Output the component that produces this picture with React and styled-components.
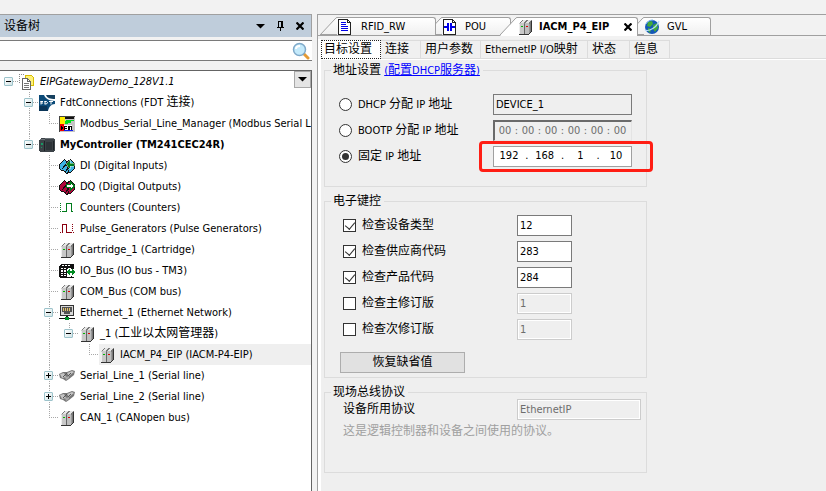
import { useState } from "react";
import styled, { createGlobalStyle, css } from "styled-components";

const GlobalStyle = createGlobalStyle`
  * {
    box-sizing: border-box;
  }
  body {
    margin: 0;
    background: #f0f0f0;
    color: #000;
    font: 11px/14px "DejaVu Sans Condensed", "Noto Sans CJK SC", sans-serif;
  }
  button, input {
    font: inherit;
    color: inherit;
    margin: 0;
    padding: 0;
  }
`;

const Page = styled.div`
  display: flex;
  gap: 5px;
  min-height: 100vh;
  padding-top: 14px;
  background: #f2f2f2;
`;

/* ---------- device tree ---------- */

const Sidebar = styled.aside`
  display: flex;
  flex-direction: column;
  flex: 0 0 312px;
  min-width: 0;
`;

const PanelHeader = styled.header`
  display: flex;
  align-items: center;
  height: 23px;
  padding: 0 1px 0 4px;
  background: #bfcddb;
  border-top: 1px solid #a0a0a0;
  border-right: 1px solid #a0a0a0;
`;

const PanelTitle = styled.h1`
  flex: 1;
  margin: 0;
  font-size: 12px;
  font-weight: normal;
`;

const IconButton = styled.button`
  display: grid;
  place-items: center;
  width: ${(props) => props.$width || 20}px;
  height: 16px;
  border: 0;
  background: none;
`;

const SearchBar = styled.label`
  display: flex;
  align-items: center;
  height: 21px;
  margin: 3px 0 9px;
  padding-right: 2px;
  background: #fff;
  border: solid #7a7a7a;
  border-width: 1px 0;
`;

const SearchInput = styled.input`
  flex: 1;
  min-width: 0;
  border: 0;
  outline: 0;
  background: none;
`;

const Tree = styled.ul`
  flex: 1;
  margin: 0;
  padding: 0;
  list-style: none;
  background: #fff;
  border-top: 1px solid #646464;
  border-right: 1px solid #646464;
  overflow: hidden;
`;

const TreeRow = styled.li`
  display: flex;
  align-items: center;
  height: 21px;
`;

const dotsDown =
  "repeating-linear-gradient(to bottom, #a8a8a8 0 1px, transparent 1px 2px)";
const dotsAcross =
  "repeating-linear-gradient(to right, #a8a8a8 0 1px, transparent 1px 2px)";

const guides = {
  none: css``,
  root: css`
    background: ${dotsAcross} right 10px / 8px 1px no-repeat;
  `,
  line: css`
    background: ${dotsDown} 10px 0 / 1px 100% no-repeat;
  `,
  tee: css`
    background: ${dotsDown} 10px 0 / 1px 100% no-repeat,
      ${dotsAcross} right 10px / 10px 1px no-repeat;
  `,
  end: css`
    background: ${dotsDown} 10px 0 / 1px 10px no-repeat,
      ${dotsAcross} right 10px / 10px 1px no-repeat;
  `,
};

const Guide = styled.span`
  display: flex;
  align-items: center;
  flex: 0 0 20px;
  height: 21px;
  padding-left: 5px;
  ${(props) => guides[props.$kind]}

  &:first-child {
    flex-basis: 19px;
    padding-left: 4px;
  }
`;

const Expander = styled.button`
  display: grid;
  place-items: center;
  width: 9px;
  height: 9px;
  border: 1px solid #9cc3cb;
  border-radius: 1px;
  background: linear-gradient(135deg, #fff, #d3e4e6);
`;

const NodeLabel = styled.span`
  display: flex;
  align-items: center;
  gap: 5px;
  flex: 1;
  min-width: 0;
  height: 21px;
  white-space: nowrap;
  overflow: hidden;
  font-weight: ${(props) => (props.$bold ? "bold" : "normal")};
  font-style: ${(props) => (props.$italic ? "italic" : "normal")};
  background: ${(props) => (props.$selected ? "#efefef" : "none")};

  svg {
    flex: none;
  }
`;

const TreeMenuButton = styled.button`
  display: grid;
  place-items: center;
  align-self: flex-start;
  width: 17px;
  height: 17px;
  background: #e4e4e4;
  border: 1px solid #a8a8a8;
`;

/* ---------- editor ---------- */

const Editor = styled.main`
  display: flex;
  flex-direction: column;
  flex: 1;
  min-width: 0;
  border-top: 1px solid #a0a0a0;
  border-left: 1px solid #a0a0a0;
`;

const FileTabs = styled.nav`
  display: flex;
  height: 21px;
  padding: 2px 2px 0;
  box-shadow: inset 0 -1px #a0a0a0;
`;

const FileTab = styled.div`
  display: flex;
  position: relative;
  z-index: ${(props) => (props.$active ? 5 : 4 - props.$order)};
  width: ${(props) => props.$width}px;
  height: ${(props) => (props.$active ? 19 : 18)}px;
  margin-left: ${(props) => (props.$order ? -11 : 0)}px;
`;

const FileTabBody = styled.div`
  display: flex;
  align-items: center;
  flex: 1;
  padding-right: 3px;
  background: linear-gradient(#fff, ${(props) => (props.$active ? "#fff" : "#f0f0f0")});
  border-top: 1px solid #a0a0a0;
  border-right: 1px solid #a0a0a0;
  border-top-right-radius: 3px;
`;

const FileTabButton = styled.button`
  display: flex;
  align-items: center;
  gap: ${(props) => props.$gap}px;
  flex: 1;
  border: 0;
  background: none;
  white-space: nowrap;
  font-weight: ${(props) => (props.$active ? "bold" : "normal")};
`;

const EditorPage = styled.div`
  flex: 1;
  margin-top: 3px;
  background: #efefef;
  border-left: 3px solid #fff;
`;

const SubTabs = styled.div`
  display: flex;
  height: 21px;
  padding-top: 1px;
  border-bottom: 1px solid #fff;
  box-shadow: inset 0 -1px #dcdcdc;
`;

const SubTab = styled.button`
  width: ${(props) => props.$width}px;
  height: 19px;
  padding-left: ${(props) => (props.$active ? 2 : 4)}px;
  border: solid #dcdcdc;
  border-width: 1px 1px 1px 0;
  background: #f0f0f0;
  text-align: left;
  white-space: nowrap;
  ${(props) =>
    props.$active &&
    css`
      background: #fff;
      border: 1px dotted #222;
    `}
`;

const Form = styled.form`
  display: flex;
  flex-direction: column;
  gap: 7px;
  max-width: 326px;
  padding: 3px 0 0 3px;
`;

const Group = styled.fieldset`
  min-width: 0;
  margin: 0;
  padding: ${(props) => props.$padding};
  border: 1px solid #dcdcdc;
`;

const Legend = styled.legend`
  height: 14px;
  margin-left: ${(props) => props.$shift || 0}px;
  padding: 0 3px 0 2px;

  a {
    color: #00f;
  }
`;

const FormRow = styled.div`
  display: flex;
  align-items: center;
  justify-content: space-between;
  position: relative;
  height: ${(props) => props.$height || 26}px;
`;

const ChoiceLabel = styled.label`
  display: flex;
  align-items: center;
  gap: 6px;
  white-space: nowrap;
`;

const Han = styled.span`
  font-size: 12px;
`;

const Radio = styled.input`
  appearance: none;
  display: grid;
  place-items: center;
  width: 13px;
  height: 13px;
  border: 1px solid #333;
  border-radius: 50%;
  background: #fff;

  &:checked::after {
    content: "";
    width: 7px;
    height: 7px;
    border-radius: 50%;
    background: #333;
  }
`;

const Checkbox = styled.input`
  appearance: none;
  display: grid;
  justify-items: center;
  width: 13px;
  height: 13px;
  border: 1px solid #333;
  background: #fff;

  &:checked::after {
    content: "";
    width: 5px;
    height: 8px;
    border: solid #333;
    border-width: 0 1px 1px 0;
    transform: rotate(40deg);
  }
`;

const TextField = styled.input`
  width: ${(props) => props.$width}px;
  height: 21px;
  padding: 0 2px;
  border: 1px solid #7a7a7a;
  background: ${(props) => (props.readOnly ? "#efefef" : "#fff")};

  &:disabled {
    color: #6d6d6d;
    background: #efefef;
    border-color: #ccc;
    box-shadow: inset 0 0 0 1px #fff;
  }
`;

const SegmentField = styled.div`
  display: flex;
  align-items: center;
  width: 139px;
  height: 21px;
  background: #fff;
  border: 1px solid #a0a0a0;
  ${(props) =>
    props.$disabled &&
    css`
      padding-left: 2px;
      color: #6d6d6d;
      background: #efefef;
      border: solid #6a6a6a;
      border-width: 2px 1px 1px 2px;
      border-right-color: #e4e4e4;
      border-bottom-color: #e4e4e4;
    `}

  span {
    width: ${(props) => (props.$disabled ? 7 : 6)}px;
    text-align: center;
  }
`;

const Segment = styled.input`
  width: ${(props) => props.$width}px;
  border: 0;
  outline: 0;
  background: none;
  text-align: center;
`;

const Highlight = styled.div`
  position: absolute;
  inset: -2px -21px -3px 140px;
  border: 3px solid #ff1e14;
  border-radius: 4px;
  pointer-events: none;
`;

const ResetButton = styled.button`
  display: block;
  width: 125px;
  height: 21px;
  margin: 10px 0 0 -3px;
  border: 1px solid #adadad;
  background: #e1e1e1;
`;

const Hint = styled.p`
  margin: 4px 0 0;
  color: #a0a0a0;
`;

/* ---------- icons ---------- */

const Icon = ({ children, size = 16 }) => (
  <svg
    width={size}
    height={size}
    viewBox="0 0 16 16"
    shapeRendering="crispEdges"
    aria-hidden="true"
  >
    {children}
  </svg>
);

const ProjectIcon = () => (
  <Icon>
    <path d="M0 0h1v1H0zM2 0h1v1H2zM4 0h1v1H4zM0 2h1v1H0zM0 4h1v1H0zM0 6h1v1H0zM0 8h1v1H0z" fill="#888" />
    <path d="M6.500 1.500h6l2 2v8h-8z" fill="#fff27a" stroke="#d8bd00" />
    <path d="M3.500 4.500h5l3 3v8h-8z" fill="#fff" stroke="#666" />
    <path d="M8.500 4.500v3h3" fill="none" stroke="#666" />
    <path d="M5 9h5v1H5zM5 11h5v1H5zM5 13h5v1H5z" fill="#777" />
  </Icon>
);

const FdtIcon = () => (
  <svg width="16" height="16" viewBox="0 0 16 16" aria-hidden="true">
    <path d="M0 0h5c1 3 5 6 11 6v3c-4 0-6 3-7 7H0z" fill="#0b4a78" />
    <path d="M7 0h9v4C11 4 8 3 7 0z" fill="#16405f" />
    <path d="M0 11h8l1 5H0z" fill="#0a3558" />
    <path d="M2 9.500V6M1.500 6.500H4M2 8h2M6 6v3M5.500 6.500H7.500l1 1-1 1.500h-2M10 6.500h4M12 6.500v3" fill="none" stroke="#fff" />
  </svg>
);

const ModbusIcon = () => (
  <Icon>
    <path d="M0 0h16v16H0z" fill="#c4c4c4" />
    <path d="M1 1h5v7H1z" fill="#ffee00" />
    <path d="M6 1h9v2H6z" fill="#111" />
    <path d="M7 4h8v1h-3v2H9v1H6V5h1z" fill="#00e020" />
    <path d="M1 8h4v7H1z" fill="#f00000" />
    <path d="M5 9h8v6H5z" fill="#fff" />
    <path d="M2 10l3 2-3 2zM5 10h3v1H6v1h2v1H6v2H5zM9 10h4v5h-1v-4h-1v4H9z" fill="#000" />
    <path d="M5 14h9v1H5z" fill="#1020ee" />
    <path d="M0 0h16v1H0zM0 0h1v16H0z" fill="#444" />
  </Icon>
);

const ControllerIcon = () => (
  <Icon>
    <path d="M0 3l2-2h13l1 2v11l-2 1H2l-2-1z" fill="#3b4247" />
    <path d="M1 2h5v1H1zM6 1h9v1H6z" fill="#6a7277" />
    <path d="M5 4h1v10H5zM14 4h1v9h-1z" fill="#1d2226" />
    <path d="M7 5h6v8H7z" fill="#2d3338" />
    <path d="M2 6h2v2H2zM2 10h1v1H2z" fill="#159a62" />
  </Icon>
);

const ChannelIcon = ({ color, input }) => (
  <Icon>
    <path d="M6.500 5.500l5-4 4 4v5l-4 4h-3z" fill={color} stroke="#111" />
    <path d="M.500 6.500l5-5 2 2v2l2 9-2 1-3-3h-2l-2-2z" fill={color} stroke="#111" />
    <path d="M3 11l5-6M6 14l6-7" fill="none" stroke="#111" />
    <path
      d={input ? "M7 6l4-4v3h4v3h-4v3z" : "M15.500 7l-4-4v2.500h-4v3h4V11z"}
      fill={input ? "#007c1c" : "#fff"}
      stroke={input ? "#dff5e2" : "#00771a"}
      strokeWidth={input ? 0.5 : 1}
    />
  </Icon>
);

const WaveIcon = ({ color, up }) => (
  <Icon>
    <path
      d={up ? "M3 11.500h4.500V3.500h5V12M12 11.500h2" : "M3.500 12V3.500h4V11.500h5"}
      fill="none"
      stroke={color}
    />
    <path
      d={
        up
          ? "M1 3h1v1H1zM1 5h1v1H1zM1 7h1v1H1zM1 9h1v1H1zM1 11h1v1H1z"
          : "M1 11h1v1H1zM13 3h1v1h-1zM13 5h1v1h-1zM13 7h1v1h-1zM13 9h1v1h-1zM14 11h1v1h-1z"
      }
      fill={color}
    />
  </Icon>
);

const ModuleIcon = () => (
  <Icon>
    <path d="M2 4l4-3h8l1 1v10l-3 3H2z" fill="#7a7a7a" />
    <path d="M2 4h5v11H2z" fill="#c9c9c9" />
    <path d="M8 4h4v11H8z" fill="#bebebe" />
    <path d="M3 4l3-3h3L7 4zM8 4l3-3h3l-2 3z" fill="#e6e6e6" />
    <path d="M7 5h1v10H7z" fill="#666" />
    <path d="M12 5h1v9h-1z" fill="#999" />
    <path d="M2 15h10v1H2zM12 14h1v1h-1zM13 13h1v1h-1zM14 2h1v11h-1z" fill="#333" />
    <path d="M4 7h2v1H4z" fill="#00b400" />
    <path d="M9 7h2v1H9z" fill="#e00000" />
    <path d="M2 5h1v10H2z" fill="#eee" />
  </Icon>
);

const BusIcon = () => (
  <Icon>
    <path d="M0 3l2-2h13v5h-2v8h2v1H1l-1-1z" fill="#111" />
    <path d="M3 2h2v1H3zM6 2h2v1H6zM9 2h2v1H9zM2 5h2v1H2zM5 5h2v1H5zM9 5h3v1H9zM2 7h2v2H2zM5 7h2v2H5zM2 10h2v1H2zM5 10h2v1H5zM2 12h2v1H2zM5 12h2v1H5zM8 13h4v1H8z" fill="#fff" />
    <path d="M8 6h8v7H8z" fill="#fff" />
    <path d="M7 9l4-4v3h2V5l3 4-3 4v-3h-2v3z" fill="#008a22" />
  </Icon>
);

const EthernetIcon = () => (
  <Icon>
    <path d="M1.500.500h13v10h-13z" fill="#d8d8d8" stroke="#333" />
    <path d="M3 2h10v5h-2v2H5V7H3z" fill="#545454" />
    <path d="M4 3h1v3H4zM6 3h1v3H6zM8 3h1v3H8zM10 3h1v3h-1z" fill="#e4c36a" />
    <path d="M7 11h2v2H7zM0 13h16v1H0z" fill="#111" />
    <path d="M6 12h4v3H6z" fill="#008e28" />
  </Icon>
);

const SerialIcon = () => (
  <svg width="16" height="16" viewBox="0 0 16 16" aria-hidden="true">
    <path d="M0 6l4-2h4l5-2 3 1-1 4-5 4-3 2-3-2-3-1z" fill="#777" />
    <path d="M1 6l4-1 2 4-4 1zM8 5l5-2 2 1-5 4z" fill="#c4c4c4" />
    <path d="M4 9l4-4M7 10l5-5" stroke="#555" />
    <path d="M6 9l4-1v2l-3 2z" fill="#a8a8a8" />
  </svg>
);

const DocIcon = ({ contact }) => (
  <Icon>
    <path d="M1.500.500h9l3 3v12h-12z" fill="#fff" stroke="#222" />
    <path d="M10.500.500v3h3" fill="none" stroke="#222" />
    {contact ? (
      <path d="M2 7h3v2H2zM5 4h2v8H5zM8 4h2v8H8zM10 7h3v2h-3z" fill="#0000e8" />
    ) : (
      <path d="M4 3h5v1H4zM4 5h5v1H4zM4 7h7v1H4zM4 9h7v1H4zM4 11h7v1H4z" fill="#0000e8" />
    )}
  </Icon>
);

const GlobeIcon = () => (
  <svg width="16" height="16" viewBox="0 0 16 16" aria-hidden="true">
    <circle cx="8" cy="8" r="7" fill="#1458b8" />
    <path d="M4 3l4-1 1 3-3 3-3-1zM9 6l4-2 1 5-3 4-2-3zM4 9l3 1-1 4-2-2z" fill="#42aa3c" />
    <path d="M1 11C5 13 13 8 15 2" fill="none" stroke="#b5dcfa" strokeWidth="1.200" />
    <path d="M2 5c2-3 4-4 7-4" fill="none" stroke="#76b9ed" />
  </svg>
);

const SearchIcon = () => (
  <svg width="18" height="18" viewBox="0 0 18 18" aria-hidden="true">
    <path d="M12 12l4 4" stroke="#e39a35" strokeWidth="3" strokeLinecap="round" />
    <circle cx="7.500" cy="7.500" r="6" fill="#c4eafb" stroke="#7fa9c9" strokeWidth="1.500" />
    <path d="M4 7c0-2 2-3 4-3" fill="none" stroke="#fff" strokeWidth="2" />
  </svg>
);

const ArrowIcon = () => (
  <svg width="9" height="5" viewBox="0 0 9 5" aria-hidden="true">
    <path d="M0 0h9L4.500 4.500z" />
  </svg>
);

const PinIcon = () => (
  <svg width="7" height="10" viewBox="0 0 7 10" shapeRendering="crispEdges" aria-hidden="true">
    <path d="M1.500 6V.500h4V6M4.500 0v6M0 6.500h7M3.500 7v3" fill="none" stroke="#000" />
  </svg>
);

const CrossIcon = () => (
  <svg width="8" height="8" viewBox="0 0 8 8" aria-hidden="true">
    <path d="M.500.500l7 7M7.500.500l-7 7" stroke="#000" strokeWidth="2.200" />
  </svg>
);

const SignIcon = ({ plus }) => (
  <svg width="5" height="5" viewBox="0 0 5 5" shapeRendering="crispEdges" aria-hidden="true">
    <path d={plus ? "M0 2h5v1H0zM2 0h1v5H2z" : "M0 2h5v1H0z"} />
  </svg>
);

const SlantEdge = ({ active }) => (
  <svg width="17" height={active ? 19 : 18} aria-hidden="true">
    <defs>
      <linearGradient id="tabFill" x1="0" y1="0" x2="0" y2="1">
        <stop offset="0" stopColor="#fff" />
        <stop offset="1" stopColor="#f0f0f0" />
      </linearGradient>
    </defs>
    <path
      d={active ? "M0 19L15 2q1-1.500 2-1.500V19z" : "M1 17L15 2q1-1.500 2-1.500V17z"}
      fill={active ? "#fff" : "url(#tabFill)"}
    />
    <path d="M0 18L15 2q1-1.500 2-1.500" fill="none" stroke="#a0a0a0" />
    {!active && <path d="M0 17.500h17" stroke="#a0a0a0" />}
  </svg>
);

/* ---------- data ---------- */

const nodes = [
  { label: "EIPGatewayDemo_128V1.1", icon: <ProjectIcon />, guides: ["root"], sign: "-", italic: true },
  { label: "FdtConnections (FDT 连接)", icon: <FdtIcon />, guides: ["none", "tee"], sign: "-" },
  { label: "Modbus_Serial_Line_Manager (Modbus Serial Lin", icon: <ModbusIcon />, guides: ["none", "line", "end"] },
  { label: "MyController (TM241CEC24R)", icon: <ControllerIcon />, guides: ["none", "end"], sign: "-", bold: true },
  { label: "DI (Digital Inputs)", icon: <ChannelIcon color="#3eb2e4" input />, guides: ["none", "none", "tee"] },
  { label: "DQ (Digital Outputs)", icon: <ChannelIcon color="#b3063e" />, guides: ["none", "none", "tee"] },
  { label: "Counters (Counters)", icon: <WaveIcon color="#007c1c" up />, guides: ["none", "none", "tee"] },
  { label: "Pulse_Generators (Pulse Generators)", icon: <WaveIcon color="#8b0010" />, guides: ["none", "none", "tee"] },
  { label: "Cartridge_1 (Cartridge)", icon: <ModuleIcon />, guides: ["none", "none", "tee"] },
  { label: "IO_Bus (IO bus - TM3)", icon: <BusIcon />, guides: ["none", "none", "tee"] },
  { label: "COM_Bus (COM bus)", icon: <ModuleIcon />, guides: ["none", "none", "tee"] },
  { label: "Ethernet_1 (Ethernet Network)", icon: <EthernetIcon />, guides: ["none", "none", "tee"], sign: "-" },
  { label: "_1 (工业以太网管理器)", icon: <ModuleIcon />, guides: ["none", "none", "line", "end"], sign: "-" },
  { label: "IACM_P4_EIP (IACM-P4-EIP)", icon: <ModuleIcon />, guides: ["none", "none", "line", "none", "end"], selected: true },
  { label: "Serial_Line_1 (Serial line)", icon: <SerialIcon />, guides: ["none", "none", "tee"], sign: "+" },
  { label: "Serial_Line_2 (Serial line)", icon: <SerialIcon />, guides: ["none", "none", "tee"], sign: "+" },
  { label: "CAN_1 (CANopen bus)", icon: <ModuleIcon />, guides: ["none", "none", "end"] },
];

const files = [
  { name: "RFID_RW", icon: <DocIcon />, width: 116, gap: 8 },
  { name: "POU", icon: <DocIcon contact />, width: 86, gap: 7 },
  { name: "IACM_P4_EIP", icon: <ModuleIcon />, width: 138, gap: 6, active: true },
  { name: "GVL", icon: <GlobeIcon />, width: 84, gap: 7 },
];

const pages = [
  { name: "目标设置", width: 60, active: true },
  { name: "连接", width: 40 },
  { name: "用户参数", width: 60 },
  { name: "EthernetIP I/O映射", width: 107 },
  { name: "状态", width: 42 },
  { name: "信息", width: 40 },
];

const keyingChecks = [
  { label: "检查设备类型", value: "12", checked: true },
  { label: "检查供应商代码", value: "283", checked: true },
  { label: "检查产品代码", value: "284", checked: true },
  { label: "检查主修订版", value: "1", checked: false },
  { label: "检查次修订版", value: "1", checked: false },
];

/* ---------- views ---------- */

// Chinese runs are set one pixel larger than the Latin ones beside them
const Text = ({ children }) => (
  <span>
    {children
      .split(/([\u3000-\u9fff]+)/)
      .map((part, index) => (index % 2 ? <Han key={index}>{part}</Han> : part))}
  </span>
);

const DeviceTree = () => (
  <Sidebar>
    <PanelHeader>
      <PanelTitle>设备树</PanelTitle>
      <IconButton aria-label="菜单"><ArrowIcon /></IconButton>
      <IconButton aria-label="固定"><PinIcon /></IconButton>
      <IconButton aria-label="关闭"><CrossIcon /></IconButton>
    </PanelHeader>
    <SearchBar>
      <SearchInput type="text" aria-label="搜索" />
      <SearchIcon />
    </SearchBar>
    <Tree>
      {nodes.map((node, index) => (
        <TreeRow key={node.label}>
          {node.guides.map((kind, depth) => (
            <Guide key={depth} $kind={kind}>
              {node.sign && depth === node.guides.length - 1 && (
                <Expander aria-label={node.label}>
                  <SignIcon plus={node.sign === "+"} />
                </Expander>
              )}
            </Guide>
          ))}
          <NodeLabel $bold={node.bold} $italic={node.italic} $selected={node.selected}>
            {node.icon}
            <Text>{node.label}</Text>
          </NodeLabel>
          {index === 0 && (
            <TreeMenuButton aria-label="选项"><ArrowIcon /></TreeMenuButton>
          )}
        </TreeRow>
      ))}
    </Tree>
  </Sidebar>
);

const Segments = ({ values, separator, width, disabled, label }) => (
  <SegmentField $disabled={disabled} role="group" aria-label={label}>
    {values.map((value, index) => [
      index > 0 && <span key={"s" + index}>{separator}</span>,
      <Segment
        key={index}
        $width={width}
        defaultValue={value}
        disabled={disabled}
        aria-label={label + " " + (index + 1)}
      />,
    ])}
  </SegmentField>
);

const AddressSettings = () => {
  const [mode, setMode] = useState("fixed");
  const choice = (value, label) => (
    <ChoiceLabel>
      <Radio
        type="radio"
        name="mode"
        checked={mode === value}
        onChange={() => setMode(value)}
      />
      <Text>{label}</Text>
    </ChoiceLabel>
  );

  return (
    <Group $padding="14px 14px 17px 14px">
      <Legend $shift={-8}>
        <Text>地址设置 </Text>
        <a href="#dhcp"><Text>(配置DHCP服务器)</Text></a>
      </Legend>
      <FormRow>
        {choice("dhcp", "DHCP 分配 IP 地址")}
        <TextField $width={139} defaultValue="DEVICE_1" readOnly aria-label="设备名" />
      </FormRow>
      <FormRow>
        {choice("bootp", "BOOTP 分配 IP 地址")}
        <Segments
          values={["00", "00", "00", "00", "00", "00"]}
          separator=":"
          width={16}
          label="MAC"
          disabled
        />
      </FormRow>
      <FormRow>
        {choice("fixed", "固定 IP 地址")}
        <Segments values={["192", "168", "1", "10"]} separator="." width={30} label="IP" />
        <Highlight />
      </FormRow>
    </Group>
  );
};

const ElectronicKeying = () => {
  const [checks, setChecks] = useState(keyingChecks);
  const toggle = (index) =>
    setChecks(checks.map((c, i) => (i === index ? { ...c, checked: !c.checked } : c)));

  return (
    <Group $padding="4px 74px 4px 18px">
      <Legend $shift={-12}><Text>电子键控</Text></Legend>
      {checks.map((check, index) => (
        <FormRow key={check.label}>
          <ChoiceLabel>
            <Checkbox
              type="checkbox"
              checked={check.checked}
              onChange={() => toggle(index)}
            />
            <Text>{check.label}</Text>
          </ChoiceLabel>
          <TextField
            $width={55}
            defaultValue={check.value}
            disabled={!check.checked}
            aria-label={check.label}
          />
        </FormRow>
      ))}
      <ResetButton type="button"><Text>恢复缺省值</Text></ResetButton>
    </Group>
  );
};

const FieldbusProtocol = () => (
  <Group $padding="0 5px 33px 18px">
    <Legend $shift={-12}><Text>现场总线协议</Text></Legend>
    <FormRow $height={21}>
      <ChoiceLabel htmlFor="protocol"><Text>设备所用协议</Text></ChoiceLabel>
      <TextField id="protocol" $width={124} defaultValue="EthernetIP" disabled />
    </FormRow>
    <Hint><Text>这是逻辑控制器和设备之间使用的协议。</Text></Hint>
  </Group>
);

export default function App() {
  return (
    <>
      <GlobalStyle />
      <Page>
        <DeviceTree />
        <Editor>
          <FileTabs>
            {files.map((file, index) => (
              <FileTab key={file.name} $order={index} $width={file.width} $active={file.active}>
                <SlantEdge active={file.active} />
                <FileTabBody $active={file.active}>
                  <FileTabButton $gap={file.gap} $active={file.active}>
                    {file.icon}
                    {file.name}
                  </FileTabButton>
                  {file.active && (
                    <IconButton $width={12} aria-label="关闭标签"><CrossIcon /></IconButton>
                  )}
                </FileTabBody>
              </FileTab>
            ))}
          </FileTabs>
          <EditorPage>
            <SubTabs>
              {pages.map((page) => (
                <SubTab key={page.name} $width={page.width} $active={page.active}>
                  <Text>{page.name}</Text>
                </SubTab>
              ))}
            </SubTabs>
            <Form>
              <AddressSettings />
              <ElectronicKeying />
              <FieldbusProtocol />
            </Form>
          </EditorPage>
        </Editor>
      </Page>
    </>
  );
}
